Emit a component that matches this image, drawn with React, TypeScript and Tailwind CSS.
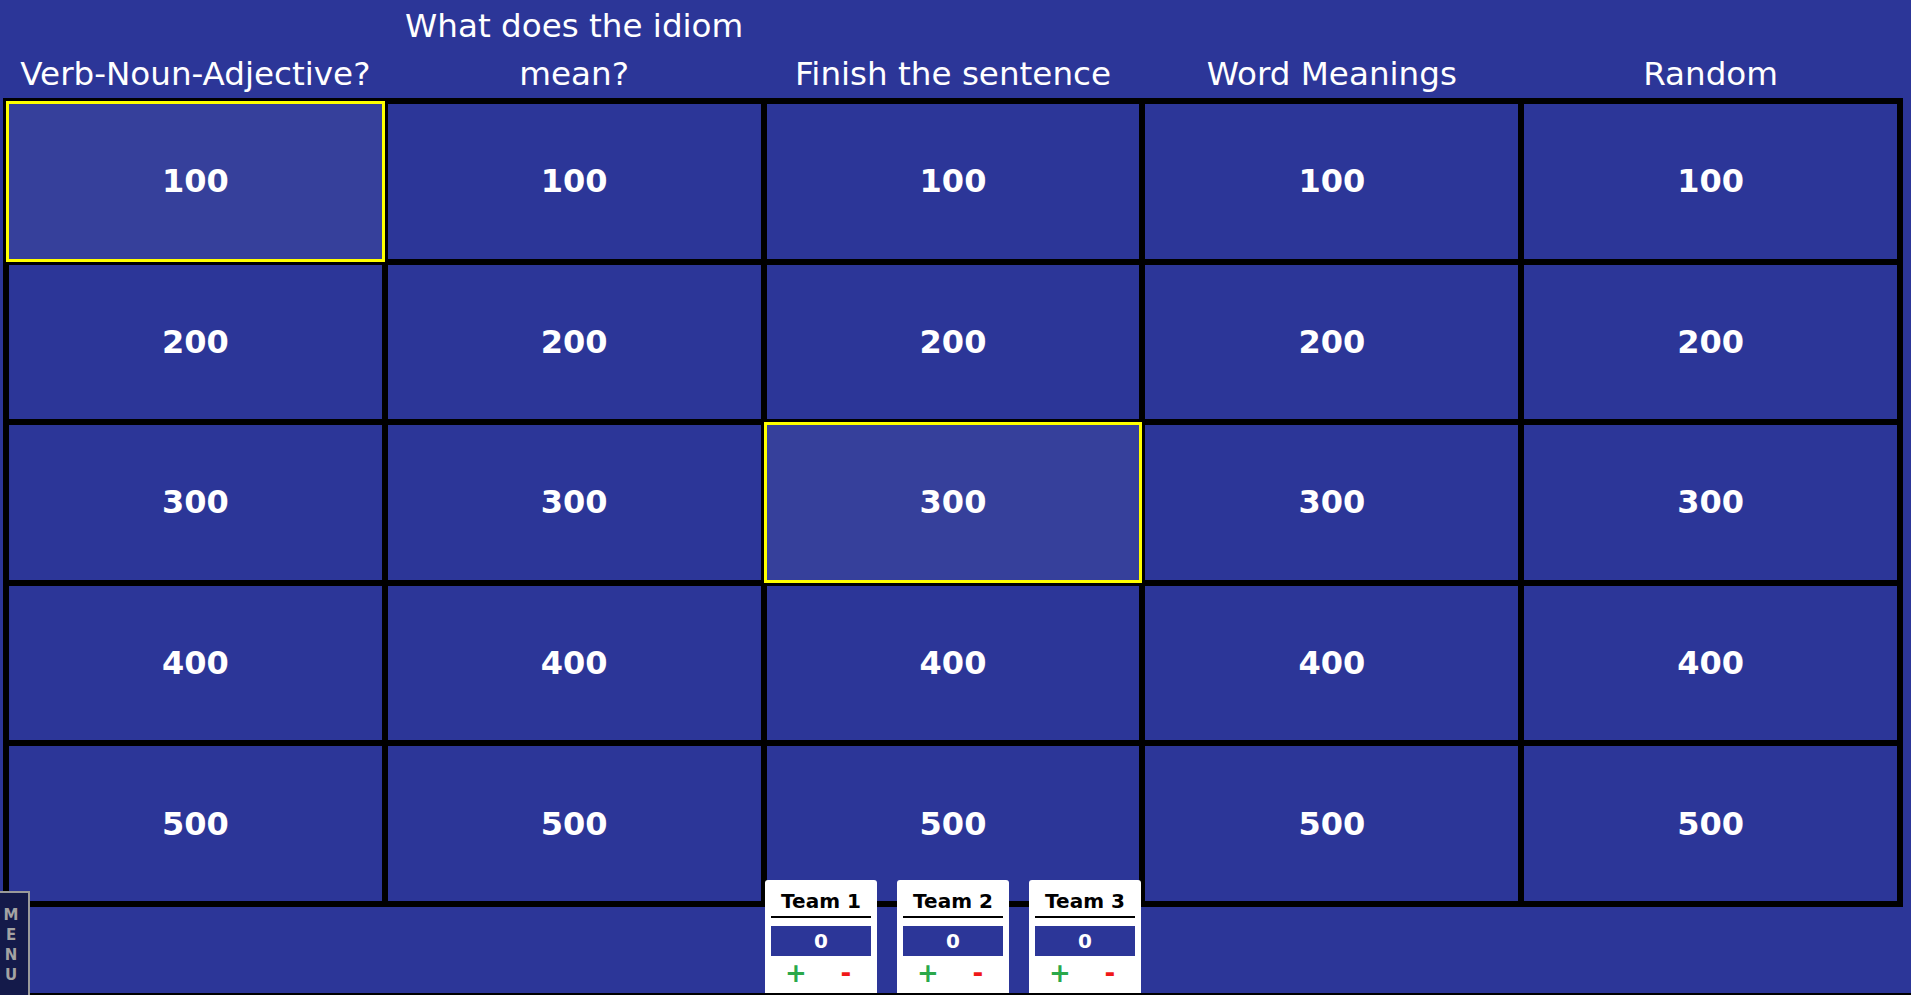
const categories = [
  'Verb-Noun-Adjective?',
  'What does the idiom mean?',
  'Finish the sentence',
  'Word Meanings',
  'Random',
]

const values = [100, 200, 300, 400, 500]

// cells that have already been picked get the yellow outline
const picked = new Set(['0-0', '2-2'])

const teams = ['Team 1', 'Team 2', 'Team 3']

function TeamCard({ name }: { name: string }) {
  return (
    <div className="flex h-[113px] w-[112px] flex-col rounded-t-[3px] bg-white px-[6px] pt-[9px]">
      <div className="border-b-2 border-black pb-[3px] text-center text-[20px] font-bold leading-[24px] text-black">
        {name}
      </div>
      <div className="mt-[8px] flex h-[30px] items-center justify-center bg-[#2c3698] text-[20px] font-bold text-white">
        0
      </div>
      <div className="grid h-[34px] grid-cols-2 items-center text-center text-[26px] font-bold leading-none">
        <span className="text-[#2aa84a]">+</span>
        <span className="text-[#f01818]">-</span>
      </div>
    </div>
  )
}

export default function App() {
  return (
    <div className="relative h-[995px] w-full overflow-hidden bg-[#2c3698] font-['DejaVu_Sans',Verdana,sans-serif]">
      {/* category headers */}
      <div className="ml-[3px] grid h-[98px] w-[1900px] grid-cols-5 px-[3px]">
        {categories.map((c) => (
          <div
            key={c}
            className="flex items-end justify-center text-center text-[32.6px] leading-[48px] text-white"
          >
            {c}
          </div>
        ))}
      </div>

      {/* board */}
      <div className="ml-[3px] grid h-[809px] w-[1900px] grid-cols-5 grid-rows-5 bg-black p-[3px]">
        {values.map((v, row) =>
          categories.map((c, col) => {
            const done = picked.has(`${col}-${row}`)
            return (
              <div
                key={`${c}-${v}`}
                className={
                  done
                    ? 'flex items-center justify-center border-[3px] border-[#ffff00] bg-[#36409b] text-[32px] font-bold text-white'
                    : 'flex items-center justify-center border-[3px] border-black bg-[#2c3698] text-[32px] font-bold text-white'
                }
              >
                {v}
              </div>
            )
          })
        )}
      </div>

      {/* scoreboard */}
      <div className="relative z-10 ml-[3px] grid h-[86px] w-[1900px] grid-cols-5">
        <div className="col-start-3 -mt-[27px] flex justify-center gap-[20px]">
          {teams.map((t) => (
            <TeamCard key={t} name={t} />
          ))}
        </div>
      </div>
      <div className="h-[2px] bg-black" />

      {/* side menu tab */}
      <div className="absolute bottom-0 left-0 z-20 flex h-[104px] w-[30px] flex-col items-center border-t-2 border-r-2 border-[#9a9a9a] bg-[#141a4a] pr-[6px] pt-[12px] text-[15px] font-bold leading-[20px] text-[#a3a3a3]">
        <span>M</span>
        <span>E</span>
        <span>N</span>
        <span>U</span>
      </div>
    </div>
  )
}
